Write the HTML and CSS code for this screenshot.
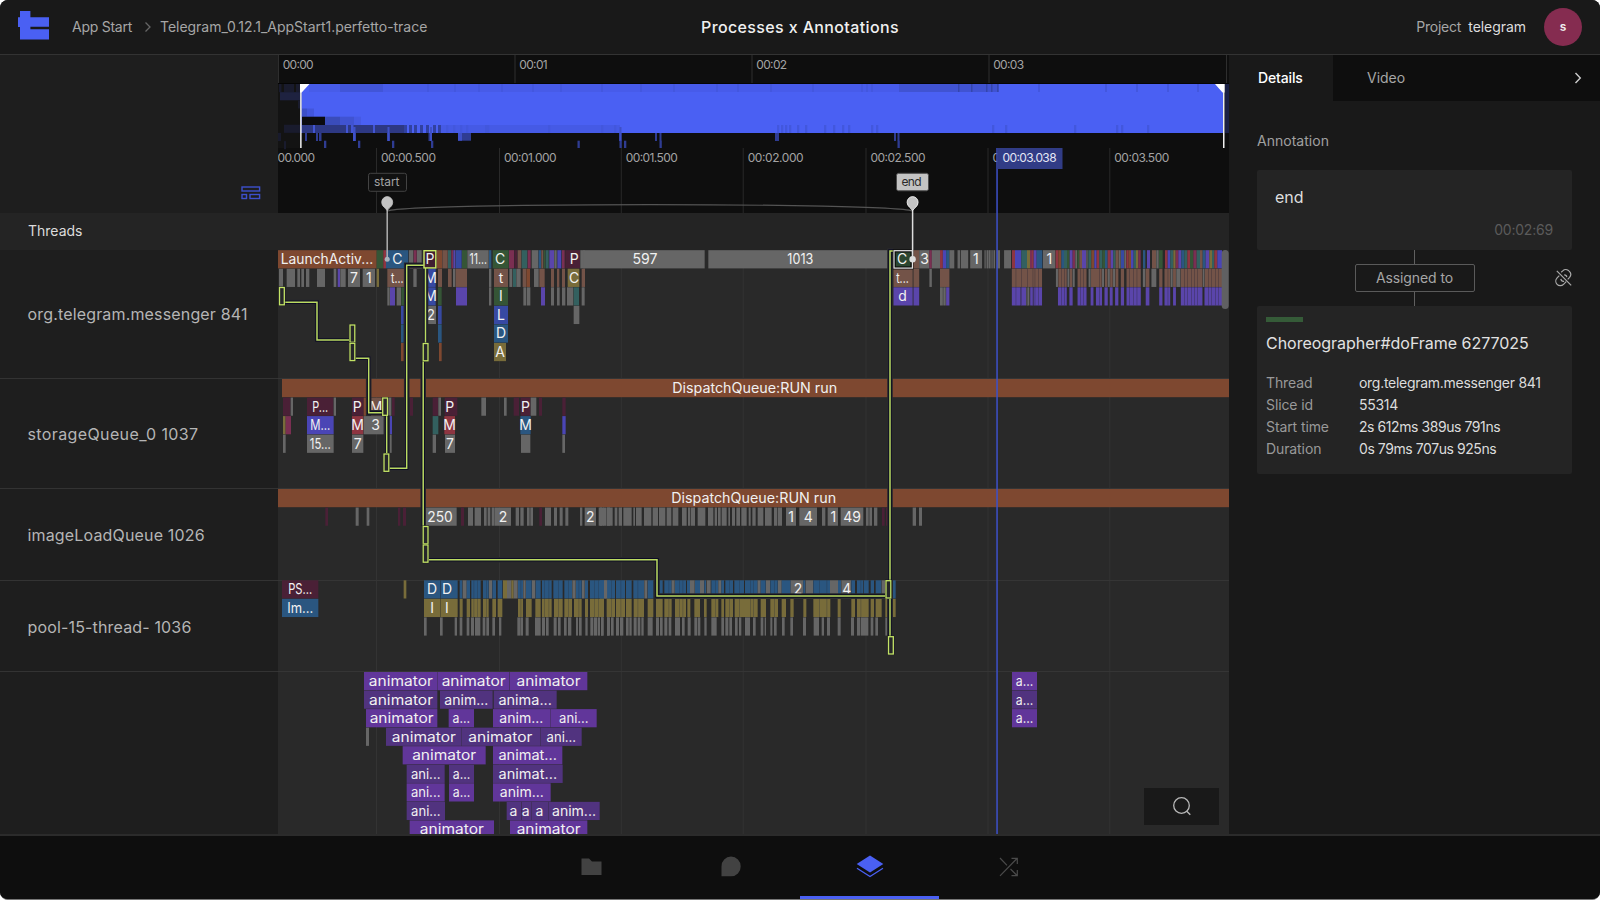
FILE: index.html
```html
<!DOCTYPE html>
<html lang="en">
<head>
<meta charset="utf-8">
<title>Processes x Annotations</title>
<link rel="stylesheet" href="styles.css">
</head>
<body>
<div class="app">
  <header class="topbar">
    <svg class="logo" width="31" height="29" viewBox="18 12 31 29"><path d="M20 12h10.400v6.200H49v9.500H30.400v2.600H49V40.500H20V28h-2V18.200h2z"/></svg>
    <nav class="crumbs">
      <span class="crumb-app">App Start</span>
      <svg class="crumb-arrow" width="8" height="12" viewBox="0 0 8 12"><path d="M1.500 1.500 6 6l-4.500 4.500"/></svg>
      <span class="crumb-file">Telegram_0.12.1_AppStart1.perfetto-trace</span>
    </nav>
    <h1 class="title">Processes x Annotations</h1>
    <div class="account">
      <span class="project">Project</span><span class="project-name">telegram</span>
      <span class="avatar">s</span>
    </div>
  </header>

  <main class="main">
    <section class="names">
      <div class="corner">
        <svg width="20" height="14" viewBox="0 0 20 14"><rect x="1" y="1" width="17.600" height="4"/><rect x="1" y="8.500" width="4.500" height="4"/><rect x="9" y="8.500" width="9.600" height="4"/></svg>
      </div>
      <div class="threads-head">Threads</div>
      <div class="lane lane-1">org.telegram.messenger 841</div>
      <div class="lane lane-2">storageQueue_0 1037</div>
      <div class="lane lane-3">imageLoadQueue 1026</div>
      <div class="lane lane-4">pool-15-thread- 1036</div>
      <div class="lane lane-5"></div>
    </section>

    <section class="chart">
      <svg id="trace" width="951" height="779" viewBox="278 55 951 779"></svg>
      <button class="search" aria-label="Search">
        <svg width="22" height="22" viewBox="0 0 22 22"><circle cx="10.500" cy="10.500" r="7.800"/><path d="m15.500 16 3.800 3.800"/></svg>
      </button>
    </section>

    <aside class="panel">
      <div class="tabs">
        <div class="tab tab-active">Details</div>
        <div class="tab tab-rest"><span>Video</span>
          <svg width="8" height="12" viewBox="0 0 8 12"><path d="M1.500 1 6.300 6 1.500 11"/></svg>
        </div>
      </div>
      <div class="panel-body">
        <h2 class="panel-label">Annotation</h2>
        <div class="card note">
          <div class="note-name">end</div>
          <div class="note-time">00:02:69</div>
        </div>
        <div class="link">
          <div class="link-mid">
            <i class="wire"></i>
            <span class="assigned">Assigned to</span>
            <i class="wire"></i>
          </div>
          <svg class="unlink" width="17" height="18" viewBox="0 0 17 18"><path d="M6.200 3.200 7.700 1.900a4.600 4.600 0 0 1 6.500.2 4.600 4.600 0 0 1 .4 6.200L12.700 10.300M11.200 12.600 8.500 15.300a4.500 4.500 0 0 1-6.400 0 4.600 4.600 0 0 1 0-6.400L4.300 6.600M5.800 9.800c.3 1.700 1.600 2.700 3.300 2.500M9.200 5.800c1.500 0 2.500 1 2.600 2.300M1.800 1.800 16.200 16.300"/></svg>
        </div>
        <div class="card slice">
          <i class="swatch"></i>
          <h3 class="slice-name">Choreographer#doFrame 6277025</h3>
          <dl class="facts">
            <dt>Thread</dt><dd>org.telegram.messenger 841</dd>
            <dt>Slice id</dt><dd>55314</dd>
            <dt>Start time</dt><dd class="tight">2s 612ms 389us 791ns</dd>
            <dt>Duration</dt><dd class="tight">0s 79ms 707us 925ns</dd>
          </dl>
        </div>
      </div>
    </aside>
  </main>

  <footer class="dock">
    <span class="dock-item"><svg width="21" height="18" viewBox="0 0 21 18"><path class="solid" d="M.5.500h7.500l3 3h9.500V17H.5z"/></svg></span>
    <span class="dock-item"><svg width="20" height="21" viewBox="0 0 20 21"><path class="solid" d="M10 .5a9.700 9.700 0 0 1 9.700 9.900A9.700 9.700 0 0 1 10 20.300H.5V10.400A9.700 9.700 0 0 1 10 .5z"/></svg></span>
    <span class="dock-item dock-active"><svg width="28" height="23" viewBox="0 0 28 23"><path class="blue" d="M14 .5 27.300 9 14 17.500.7 9z"/><path class="blue-line" d="M1 13.200 14 21.500l13-8.300"/></svg></span>
    <span class="dock-item"><svg width="20" height="20" viewBox="0 0 20 20"><path class="thin" d="M1 1l7 7.300M11.500 12 18 18.500M1 18.800 18 1.500M12.500 1.300H18.300V7M18.300 13v5.700H12.500"/></svg></span>
  </footer>
</div>
<script src="trace.js"></script>
</body>
</html>
```
FILE: styles.css
```css
* { box-sizing: border-box; margin: 0; padding: 0; }
body { background: #fff; font-family: Inter, "Open Sans", sans-serif; overflow: hidden; }
.app { width: 1600px; height: 900px; display: flex; flex-direction: column; background: #191919; border-radius: 8px; overflow: hidden; border-bottom: 1px solid #777; }

.topbar { height: 55px; display: grid; grid-template-columns: 49px 1fr auto 1fr; align-items: center; padding-right: 18px; border-bottom: 1px solid #333; background: #191919; color: #a6a6a6; font-size: 14px; }
.logo { margin-left: 18px; fill: #4a60f3; margin-top: -2px; }
.crumbs { display: flex; align-items: center; padding-left: 23px; }
.crumb-app { width: 72px; letter-spacing: -.25px; }
.crumb-arrow { width: 8px; margin-right: 8px; fill: none; stroke: #666; stroke-width: 1.3; }
.crumb-file { letter-spacing: -.03px; white-space: nowrap; }
.title { font-size: 16px; font-weight: 500; color: #f0f0f0; letter-spacing: .37px; margin-left: -31px; }
.account { display: flex; align-items: center; justify-content: flex-end; }
.project { letter-spacing: -.2px; margin-right: 7px; }
.project-name { color: #dedede; letter-spacing: -.05px; }
.avatar { width: 38px; height: 38px; border-radius: 50%; background: #852c50; color: #eee; display: flex; align-items: center; justify-content: center; font-size: 12px; font-weight: 600; margin-left: 18px; }

.main { height: 779px; display: flex; }
.names { width: 278px; display: flex; flex-direction: column; background: #1e1e1e; color: #b5b5b5; }
.corner { height: 158px; display: flex; align-items: flex-end; justify-content: flex-end; padding: 0 17px 13px 0; }
.corner svg { fill: none; stroke: #3d50cc; stroke-width: 1.4; }
.threads-head { height: 37px; background: #242424; display: flex; align-items: center; padding: 0 0 2px 28px; color: #dcdcdc; font-size: 14px; }
.lane { display: flex; align-items: center; padding: 1px 0 0 27.500px; font-size: 16px; letter-spacing: .16px; border-bottom: 1px solid #333; white-space: nowrap; }
.lane-1 { height: 129px; }
.lane-2 { height: 110px; padding-top: 2px; letter-spacing: .38px; }
.lane-3 { height: 92px; }
.lane-4 { height: 91px; padding-top: 2px; }
.lane-5 { flex: 1; border-bottom: 0; }

.chart { width: 951px; position: relative; background: #292929; }
.chart > svg { display: block; }
.search { position: absolute; right: 10px; bottom: 9px; width: 75px; height: 37px; border: 0; background: #191919; display: flex; align-items: center; justify-content: center; }
.search svg { fill: none; stroke: #b8b8b8; stroke-width: 1.3; }
.slice-text { font: 14px Inter, sans-serif; fill: #f1f1f1; text-anchor: middle; }
.tick-text { font: 12px Inter, sans-serif; fill: #a3a3a3; }

.panel { width: 371px; background: #191919; }
.tabs { height: 46px; display: flex; font-size: 14px; }
.tab { display: flex; align-items: center; }
.tab-active { width: 104px; padding-left: 29px; color: #fff; font-weight: 500; letter-spacing: -.15px; }
.tab-rest { flex: 1; justify-content: space-between; background: #0e0e0e; color: #a6a6a6; padding: 0 18px 0 34px; }
.tab-rest svg { fill: none; stroke: #ccc; stroke-width: 1.4; }
.panel-body { padding: 31px 28px 0; }
.panel-label { font-size: 14px; font-weight: 400; line-height: 18px; color: #a0a0a0; letter-spacing: .02px; }
.card { background: #242424; border-radius: 2px; }
.note { height: 80px; margin-top: 20px; padding: 16px 19px 0 18px; }
.note-name { font-size: 16px; line-height: 22px; color: #dedede; }
.note-time { font-size: 14px; line-height: 18px; text-align: right; color: #5b5b5b; margin-top: 13px; letter-spacing: -.2px; }
.link { height: 56px; display: grid; grid-template-columns: 1fr auto 1fr; align-items: center; }
.link-mid { grid-column: 2; display: flex; flex-direction: column; align-items: center; }
.wire { width: 1px; height: 14px; background: #606060; }
.assigned { width: 120px; height: 28px; border: 1px solid #5a5a5a; border-radius: 2px; display: flex; align-items: center; justify-content: center; color: #a6a6a6; font-size: 14px; letter-spacing: -.1px; }
.unlink { justify-self: end; fill: none; stroke: #aaa; stroke-width: 1.2; }
.slice { height: 168px; padding: 11px 9px 0; }
.swatch { display: block; width: 37px; height: 5px; background: #355b38; }
.slice-name { margin-top: 10px; font-size: 16px; line-height: 22px; font-weight: 400; color: #e2e2e2; white-space: nowrap; letter-spacing: -.03px; }
.facts { display: grid; grid-template-columns: 93px 1fr; margin-top: 18px; font-size: 14px; line-height: 22px; color: #999; white-space: nowrap; }
.facts dt { letter-spacing: -.1px; }
.facts dd { color: #dcdcdc; letter-spacing: -.28px; }
.facts .tight { letter-spacing: -.43px; }

.dock { height: 66px; border-top: 2px solid #2b2b2b; background: #0e0e0e; display: flex; justify-content: center; }
.dock-item { width: 139px; padding-top: 2px; display: flex; align-items: center; justify-content: center; border-bottom: 3px solid transparent; }
.dock-active { border-bottom-color: #4a60f3; }
.solid { fill: #424242; }
.blue { fill: #4a60f3; }
.blue-line { fill: none; stroke: #4a60f3; stroke-width: 1.3; }
.thin { fill: none; stroke: #4a4a4a; stroke-width: 1.2; }
```
FILE: trace.js
```js
const NS = "http://www.w3.org/2000/svg";
const svg = document.getElementById("trace");

function el(name, attrs, text) {
  const n = document.createElementNS(NS, name);
  for (const k in attrs) n.setAttribute(k, attrs[k]);
  if (text !== undefined) n.textContent = text;
  svg.appendChild(n);
  return n;
}
const rect = (x0, x1, y0, y1, fill) => el("rect", { x: x0, y: y0, width: x1 - x0, height: y1 - y0, fill });
const line = (x, y0, y1, stroke, w) => el("path", { d: `M${x} ${y0}V${y1}`, stroke, "stroke-width": w || 1 });

const COLORS = {
  O: "#7e4830", G: "#666666", N: "#355536", R: "#4a2036", B: "#2a5680", T: "#735348",
  I: "#3749a2", V: "#5a45ab", Y: "#786c3a", E: "#33605f", C: "#8d3541", M: "#7a2f52",
  P: "#61369a", D: "#51337f", K: "#4a45b5"
};
// Rendered widths of the labels that are longer than a few letters.
const WIDTHS = {
  "animator": 64, "anim...": 44, "ani...": 29.5, "a...": 17.5, "animat...": 58.5, "anima...": 53.5,
  "DispatchQueue:RUN run": 165, "LaunchActiv...": 92.5, "250": 25.5, "597": 25, "1013": 26,
  "11...": 17.5, "15...": 21, "PS...": 24, "Im...": 26, "P...": 16, "M...": 20, "t...": 12.5
};
const TOPS = [250.2, 379, 489, 580.3, 672];
const PITCH = 18.55;

function label(text, cx, y) {
  const a = { x: cx, y, class: "slice-text" };
  if (WIDTHS[text]) { a.textLength = WIDTHS[text]; a.lengthAdjust = "spacingAndGlyphs"; }
  el("text", a, text);
}

// Each entry is "start-end" + colour, then optionally "=label@centre", in units of 1/k px from ox.
function row(lane, depth, ox, k, spec, fallback) {
  const y = TOPS[lane] + depth * PITCH;
  for (const item of spec.split(";")) {
    const m = item.trim().match(/^(\d+)-(\d+)([A-Z]?)(?:=(.+?)(?:@(\d+))?)?$/);
    if (!m) continue;
    const x0 = ox + m[1] / k, x1 = ox + m[2] / k;
    rect(x0, x1, y, y + 18.2, COLORS[m[3] || fallback || "G"]);
    if (m[4]) label(m[4], m[5] ? ox + m[5] / k : (x0 + x1) / 2, y + 14);
  }
}

// Ruler background and ticks
rect(278, 1229, 55, 213, "#0e0e0e");
rect(278, 1229, 213, 250, "#242424");
[[278.5, "00:00"], [515, "00:01"], [752, "00:02"], [989, "00:03"], [1226.5, ""]].forEach(([x, t]) => {
  line(x, 55, 83, "#2e2e2e");
  if (t) el("text", { x: x + 4.2, y: 69.3, class: "tick-text", textLength: t === "00:01" ? 28.5 : 31 }, t);
});
const ticks = [[376.5, "00:00.500", 55], [499.5, "00:01.000", 52.5], [621.3, "00:01.500", 52], [743.2, "00:02.000", 56], [866, "00:02.500", 55], [988, "00:03.000", 55], [1109.800, "00:03.500", 55]];
el("text", { x: 277.5, y: 162.2, class: "tick-text", textLength: 37.5 }, "00.000");
ticks.forEach(([x, t, w]) => {
  line(x, 148, 213, "#292929");
  line(x, 250, 834, "#333333");
  el("text", { x: x + 4.5, y: 162.2, class: "tick-text", textLength: w }, t);
});
[378, 488, 580, 671].forEach(y => rect(278, 1229, y, y + 1, "#353535"));

// Overview strip
rect(278, 1229, 83, 84, "#050505");
rect(278, 301, 84, 148, "#131313");
rect(301, 1224, 84, 133, "#4a60f3");
rect(1225, 1229, 84, 133, "#1b2145");
[[279, 281.5, 0], [284, 294, 0], [296, 300, 0], [280, 300, 1], [298, 301, 2], [284, 300, 5], [278, 281, 6], [284, 286, 7]].forEach(([a, b, r]) =>
  rect(a, b, 84 + r * 8.15, 92.15 + r * 8.15, r === 1 ? "#1e2240" : "#191b2d"));
rect(309, 340, 84, 92, "#475ce9");
rect(340, 383, 84, 92, "#4155d8");
rect(383, 600, 84, 92, "#475be8");
rect(600, 900, 84, 92, "#475bea");
rect(899, 999, 84, 92, "#4053d2");
[427, 454, 478, 501, 532, 560, 601, 640, 673, 716, 737, 770, 812, 861, 866, 871, 1038, 1105, 1136, 1167, 1197].forEach(x => rect(x, x + 2, 84, 92, "#4357df"));
[958, 971, 986, 991, 997].forEach(x => rect(x, x + 1.5, 84, 92, "#3446ad"));
rect(302, 307, 108.5, 116.7, "#3c4fc8");
rect(307, 314, 108.5, 116.7, "#4256dd");
rect(302, 325, 116.7, 125, "#0b0b0f");
rect(325, 340, 116.7, 125, "#3a4cba");
rect(340, 354, 116.7, 125, "#4053d2");
rect(354, 361, 116.7, 125, "#465ae4");
rect(302, 404, 125, 133, "#2d3883");
[[313, 315], [346, 348], [351, 353.5], [373, 375]].forEach(([a, b]) => rect(a, b, 125, 133, "#4255d5"));
[[404, 407], [409, 412], [414, 417], [420, 423], [426, 429], [433, 436], [438, 441]].forEach(([a, b]) => rect(a, b, 125, 133, "#3141a0"));
rect(441, 620, 125, 133, "#455ae5");
[446, 453, 460, 466, 485, 487, 548, 601, 614, 777, 781, 785, 789, 797, 805, 824, 833, 842, 848, 871, 876, 992, 1005, 1074, 1116, 1121, 1147].forEach(x => rect(x, x + 2.3, 125, 133, "#4257dd"));
const drop = "#2f3c92", bright = "#3e50c8";
[[305, 307], [316, 318], [319, 321.5], [353, 356], [387, 390], [428.500, 432], [619, 621.5], [655, 657], [659.5, 661.5], [775, 779], [894, 896], [897.5, 899.5]].forEach(([a, b]) => rect(a, b, 133, 141, drop));
[[353, 355.5], [387.5, 389.5], [430, 432], [619.5, 621.5]].forEach(([a, b]) => rect(a, b, 127, 141, bright));
rect(458, 471, 133, 140.700, drop);
rect(458, 462, 133, 140.700, bright);
[324, 358, 392, 431, 577.5, 619.5, 624, 659.5, 897.5].forEach(x => rect(x, x + 2.3, 140.700, 148, drop));
rect(300, 301.7, 84, 148, "#d8d8d8");
rect(1223, 1224.500, 84, 148, "#f0f0f0");
el("path", { d: "M300 84H309.500L301.700 92.500H300zM1224.500 84H1215L1222.500 92.500H1224.500z", fill: "#fff" });

// org.telegram.messenger
row(0, 0, 270, 3, "24-320O=LaunchActiv...@171;320-340N;340-348C;348-415B=C@382;417-430;431-440M;441-455;500-516O;517-533T;534-543E;544-549M;550-556V;557-575I;576-591N;592-656=11...@625;657-664B;668-716N=C@690;717-732M;733-742R;743-754T;755-772E;773-782M;785-805;806-813B;814-820T;821-826N;827-836E;838-852V;853-860;862-874K;876-884M;886-930R=P@913;931-944;940-1304=597@1125;1315-1856=1013@1591");
row(0, 0, 600, 2.45, "766-782T;782-807=3@795;807-813M;813-833;833-840C;840-848K;848-856B;856-868;876-882;884-902;907-936=1@921;942-945;947-952;953-957;959-962;964-968;972-980;990-1007");
row(0, 0, 1000, 3, "36-45C;45-64K;64-81E;81-90Y;90-96M;96-101C;101-110V;110-127B;129-166=1@148;167-175C;175-184O;184-192B;192-201E;201-209N;209-218V;218-225M;226-231;232-238N;238-246T;246-258V;259-263;265-274E;274-283O;283-290K;290-298C;298-307E;307-315N;315-323B;323-332C;332-340V;340-347E;347-356T;357-362;363-372I;373-378;379-386C;386-393O;393-401K;401-408E;408-415Y;415-422M;429-436B;441-450V;456-468T;469-476;477-488N;495-503C;503-511K;511-520E;520-527Y;527-535M;535-544V;544-553B;553-562E;562-570C;570-580N;580-590M;590-600E;600-608T;608-617B;617-628V;628-636Y;636-643E;643-652C;652-666K");
row(0, 1, 270, 3, "27-39;50-75;82-90;94-102;108-118;141-165;191-199;203-210V;211-227;234-270=7;278-315=1;320-327Y;352-408T=t...@382;430-440;473-497I=M@482;504-516T;534-545T;549-556;557-591T;657-664;672-714T=t;718-727;729-738E;739-752;758-768T;769-780O;792-806;808-824T;843-852T;861-868T;876-885T;893-928Y=C@912;935-945T");
row(0, 1, 600, 2.45, "719-766T=t...@741;768-782T;807-813;833-856T;1009-1083T;1117-1122G;1123-1144T;1145-1150G;1151-1157T;1158-1163G;1170-1192T;1197-1202G;1203-1229T;1230-1235G;1237-1243T;1244-1249G;1250-1256T;1257-1262G;1263-1270T;1276-1284T;1290-1325T;1330-1336G;1337-1346T;1351-1363G;1370-1378T;1383-1397T;1398-1403G;1404-1411T;1412-1422G;1423-1476T;1477-1481G;1482-1525T");
row(0, 2, 270, 3, "352-359;360-375V;380-393;394-402N;473-497I=M@482;504-515N;558-591V;657-664;672-714N=I@693;760-768;770-781;813-825V;843-852;861-869;876-886;891-910;911-927E;935-944");
row(0, 2, 600, 2.45, "719-766V=d@741;768-782V;833-840G;841-847G;848-856V;1009-1029V;1030-1044V;1045-1052G;1054-1061V;1062-1083V;1122-1144V;1150-1158V;1170-1192V;1202-1209V;1215-1230V;1236-1244V;1249-1256V;1262-1270V;1276-1284V;1290-1325V;1337-1346V;1370-1378V;1383-1397V;1404-1411V;1423-1476V;1481-1525V");
[47, 63, 81, 98, 104, 115, 184, 192, 200, 240, 250, 297, 387, 399, 410, 503, 552, 561, 574, 582, 592, 624, 634, 645, 655].forEach(x =>
  el("rect", { x: 1000 + x / 3, y: 268.700, width: .6, height: 36.600, fill: "#2a2633", opacity: .55 }));
row(0, 3, 270, 3, "393-401I;473-498=2@482;504-515I;672-714I=L;911-928");
row(0, 4, 270, 3, "393-401B;504-515B;672-714B=D");
row(0, 5, 270, 3, "393-401O;507-515O;672-708Y=A");

// storageQueue_0
row(1, 0, 270, 3, "36-2877O=DispatchQueue:RUN run@1454");
row(1, 1, 270, 3, "39-61R;62-69;111-190R=P...;191-198;246-281R=P@262;281-288O;303-341T=M@318;354-364;366-374R;420-429R;488-504R;505-513;524-562R=P@539;634-648;702-710;731-747R;752-781R=P;782-799;807-816R;877-887R");
row(1, 2, 270, 3, "39-47Y;47-63M;111-191K=M...;246-280C=M;281-341=3@317;359-366K;488-505E;523-555C=M;751-782B=M;877-887K");
row(1, 3, 270, 3, "39-47;111-191=15...;246-280=7;359-365;488-498;525-555=7;753-781;877-885");

// imageLoadQueue
row(2, 0, 270, 3, "24-2877O=DispatchQueue:RUN run@1451");
row(2, 1, 270, 3, "166-174R;257-266;290-298;384-391R;399-408R;468-560=250@510;573-582R;594-609;614-633;642-650;653-661;665-674;675-723=2;737-747;751-761;771-779;781-789;808-816R;825-843;852-861;869-878;886-895;930-937;944-978=2;986-996;1000-1008;1010-1020");
row(2, 1, 600, 3, "0-12;20-38;44-52;56-66;70-95;100-105;108-125;132-154;158-174;177-196;200-214;218-235;246-260;264-270;272-285;293-316;324-340;344-351;354-362;365-380;385-390;396-405;409-420;424-440;446-452;457-467;473-490;495-515;522-531;533-546;558-588=1;598-651=4;666-676;683-714=1@700;722-790=49;798-806;808-816;822-832;846-854R;858-864R;938-948;957-966");

// pool-15-thread-
row(3, 0, 270, 3, "36-145R=PS...;401-409Y;462-511B=D;512-563B=D@531;569-577;578-590G;590-600;604-632;639-656;657-666G;667-678;683-697;699-711Y;711-724G;724-731Y;731-743G;744-759;760-767G;768-785;786-796G;797-812;816-845;850-878;883-906;907-917G;918-935;936-944G;945-954;960-1002;1003-1010G;1011-1020", "B");
row(3, 0, 600, 3, "0-12;12-22G;22-45;48-75;78-95;100-132;133-142G;143-160;177-188;193-215;215-224G;225-258;261-270;270-284G;285-300;300-312G;313-318;320-332G;334-355;355-364G;364-372;376-399;403-432;435-473;473-482G;482-497;498-510G;511-533;534-545G;545-572;572-610G=2@594;610-616;617-639G;640-690;690-714G;714-723;724-753G=4@740;754-765;771-790;792-806;812-822;827-844;845-856G;879-887", "B");
row(3, 1, 270, 3, "36-145B=Im...;462-511=I;512-563=I@531;569-578;590-600;604-632;639-656;667-678;683-697;744-759;768-785;796-812;816-845;852-878;883-906;912-935;945-954;960-1002;1011-1020", "Y");
row(3, 1, 600, 3, "0-12;20-45;48-75;78-95;101-132;143-160;168-188;193-215;225-258;262-271;283-300;312-320;334-355;364-372;376-399;404-473;482-498;511-534;545-558;571-581;610-619;640-691;713-722;754-765;771-806;812-822;827-845;856-862;879-887", "Y");
row(3, 2, 270, 3, "462-470;510-518;554-561;569-577;590-598;603-612;615-631;638-646;649-657;667-675;687-694;742-750;751-759;767-776;795-812;816-825;828-836;851-860;864-872;882-890;894-904;918-924;927-935;946-953;961-970;972-982;984-990;993-1001;1011-1018");
row(3, 2, 600, 3, "3-10;21-30;33-41;48-57;60-70;78-86;88-95;101-110;113-121;124-131;143-158;168-177;180-188;193-202;206-214;225-240;246-254;263-272;283-292;294-301;313-320;334-350;364-372;376-385;388-396;405-413;417-424;435-450;459-467;482-490;494-498;511-517;522-530;546-554;571-579;609-618;641-657;665-672;681-690;713-722;753-762;771-780;782-805;812-820;826-834;856-862");
// Thin separators between neighbouring slices of the pool thread
[611, 622, 648, 752, 822, 836, 864, 894, 926, 972, 984].forEach(x => el("rect", { x: 270 + x / 3, y: 580.300, width: .5, height: 36.700, fill: "#28303a", opacity: .6 }));
[34, 62, 113, 206, 237, 248, 345, 388, 417, 450, 459, 522, 657, 680, 782].forEach(x => el("rect", { x: 600 + x / 3, y: 580.300, width: .5, height: 36.700, fill: "#28303a", opacity: .6 }));

// animators
row(4, 0, 350, 3, "42-263=animator;264-478=animator;479-712=animator;1986-2061=a...", "P");
row(4, 1, 350, 3, "42-262=animator@153;270-428=anim...;431-620=anima...;1986-2061=a...", "D");
row(4, 2, 350, 3, "48-262=animator;296-372=a...;429-602=anim...@514;603-740=ani...;1986-2061=a...", "P");
row(4, 3, 350, 3, "48-57G;108-335=animator;336-572=animator@451;573-695=ani...", "D");
row(4, 4, 350, 3, "158-407=animator;429-637=animat...", "P");
row(4, 5, 350, 3, "170-284=ani...;297-372=a...;429-638=animat...", "D");
row(4, 6, 350, 3, "170-284=ani...;297-372=a...;429-602=anim...", "P");
row(4, 7, 350, 3, "170-285=ani...;470-514=a@490;515-545=a@527;546-594=a@568;595-749=anim...", "D");
row(4, 8, 350, 3, "179-432=animator;480-712=animator", "P");

// Critical path connecting the slices
const links = "M284.500 302.300H317V340H349.700M355 358.300H368.700V412.700H382.500M386.700 415.300V453.700M389 468.300H406.700V265.300H423.700M425.500 268V343.300M423.200 360.700V526M427.700 559.800H657V596H885.700M893.500 251H890V636.500";
el("path", { d: links, fill: "none", stroke: "#28282c", "stroke-width": 5.6 });
el("path", { d: links, fill: "none", stroke: "#0c0c22", "stroke-width": 3.4 });
el("path", { d: links, fill: "none", stroke: "#bbdb62", "stroke-width": 1.5 });
[[279.5, 287.5], [350, 325], [350, 343.3], [382.7, 398], [384, 454], [423.2, 343.5], [423.2, 526.5], [423.2, 544.9], [886, 580.7], [888.5, 636.700]].forEach(([x, y]) => {
  el("rect", { x: x - 1, y: y - 1, width: 6.8, height: 19.2, fill: "#12121c" });
  el("rect", { x, y, width: 4.8, height: 17.3, fill: "#26262a", stroke: "#c4e466", "stroke-width": 1.3 });
});
el("rect", { x: 424, y: 250.700, width: 11.800, height: 17.200, fill: "#3f1f31", stroke: "#c9ea66", "stroke-width": 1.4 });
label("P", 430, 264.2);
el("rect", { x: 894.300, y: 250.900, width: 17.600, height: 17, fill: "#2b4630", stroke: "#0b0b0b", "stroke-width": 3 });
el("rect", { x: 894, y: 250.700, width: 18.400, height: 17.400, fill: "none", stroke: "#e4e4e4", "stroke-width": 1.2 });
label("C", 902, 264.2);

// Annotations
el("path", { d: "M387.500 211C415 202.500 885 202.500 912.500 211", fill: "none", stroke: "#545454", "stroke-width": 1.2 });
function pin(x, active) {
  line(x, 209, 259, active ? "#dedede" : "#b0b0b0", 1.5);
  el("path", { d: `M${x} 210.500C${x - 1.500} 208 ${x - 5.500} 206.500 ${x - 5.500} 202.300A5.500 5.700 0 0 1 ${x + 5.500} 202.300C${x + 5.500} 206.500 ${x + 1.500} 208 ${x} 210.500z`, fill: "#c3c3c3", stroke: active ? "#fff" : "#c3c3c3", "stroke-width": .8 });
  el("circle", { cx: x, cy: 259.300, r: active ? 3.200 : 2.500, fill: active ? "#dcdcdc" : "#a9b4bd" });
}
pin(387.2, false);
pin(912.6, true);
el("rect", { x: 368.500, y: 173.300, width: 38, height: 18, rx: 2, fill: "#111", stroke: "#434343" });
el("text", { x: 374, y: 186.300, class: "tick-text", textLength: 25.500 }, "start");
el("rect", { x: 896.500, y: 173.300, width: 32, height: 17.500, rx: 2, fill: "#c3c3c3", stroke: "#4b4b4b" });
el("text", { x: 901.500, y: 186.300, class: "tick-text", textLength: 20, style: "fill:#2a2a2a" }, "end");

// Playhead
rect(996.3, 997.8, 148, 834, "#3d50c9");
rect(997.3, 1062.5, 148, 169, "#313c86");
el("text", { x: 1002.600, y: 162.200, class: "tick-text", textLength: 54, style: "fill:#e4e6f5" }, "00:03.038");

// Scrollbar thumb
el("rect", { x: 1221.700, y: 250, width: 7, height: 59, rx: 3.500, fill: "#606062" });
```
